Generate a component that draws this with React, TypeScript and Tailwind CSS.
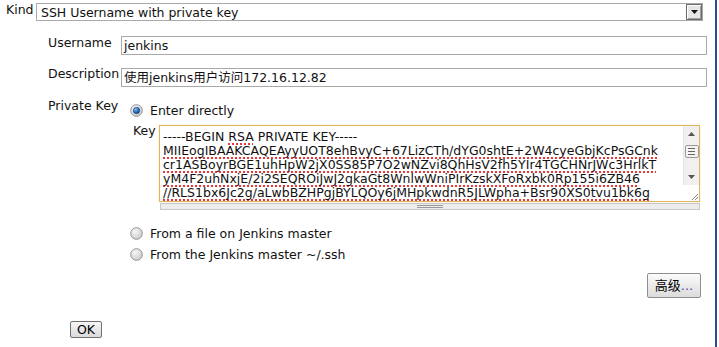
import React from "react";

function Radio({ checked }: { checked?: boolean }) {
  const id = checked ? "rc" : "ru";
  return (
    <svg width="13" height="13" viewBox="0 0 13 13" className="shrink-0">
      <defs>
        <radialGradient id={id + "o"} cx="0.35" cy="0.3" r="0.8">
          <stop offset="0" stopColor="#f8f8f8" />
          <stop offset="1" stopColor="#c9c9c9" />
        </radialGradient>
        <radialGradient id={id + "i"} cx="0.35" cy="0.3" r="0.8">
          <stop offset="0" stopColor="#8cc4f2" />
          <stop offset="0.5" stopColor="#2f78c4" />
          <stop offset="1" stopColor="#0d3a78" />
        </radialGradient>
      </defs>
      <circle cx="6.5" cy="6.5" r="5.8" fill={`url(#${id}o)`} stroke="#929292" strokeWidth="1" />
      {checked && <circle cx="6.5" cy="6.5" r="3.2" fill={`url(#${id}i)`} stroke="#143d73" strokeWidth="0.6" />}
    </svg>
  );
}

const sq = "underline decoration-dotted decoration-[#e8383a] decoration-[1.5px] underline-offset-[2px] [text-decoration-skip-ink:none]";

export default function App() {
  const lines = [
    "MIIEogIBAAKCAQEAyyUOT8ehBvyC+67LizCTh/dYG0shtE+2W4cyeGbjKcPsGCnk",
    "cr1ASBoyrBGE1uhHpW2jX0SS85P7O2wNZvi8QhHsV2fh5YIr4TGCHNrJWc3HrlkT",
    "yM4F2uhNxjE/2i2SEQROiJwJ2gkaGt8WnlwWniPIrKzskXFoRxbk0Rp155i6ZB46",
    "//RLS1bx6Jc2g/aLwbBZHPgjBYLQOy6jMHpkwdnR5JLWpha+Bsr90XS0tvu1bk6g",
  ];
  return (
    <div
      className="flex w-[719px] h-[347px] bg-white text-[#111] overflow-hidden"
      style={{ fontFamily: "'DejaVu Sans', 'Noto Sans CJK SC', sans-serif", fontSize: "12.5px" }}
    >
      <div className="w-[715px] flex flex-col pt-[3px]">
        {/* Kind */}
        <div className="flex items-start h-[18px]">
          <div className="w-[36px] pl-[6px] leading-[15px] -mt-[1.5px]">Kind</div>
          <div className="w-[667px] h-[18px] border border-[#a9a9a9] flex items-center justify-between pl-[4px]">
            <span className="leading-[15px] mt-[1px]">SSH Username with private key</span>
            <div className="w-[16px] h-[16px] bg-[#e6e6e6] border border-[#6b6b6b] shadow-[inset_1px_1px_0_#ffffff,inset_-1px_-1px_0_#a0a0a0] flex items-center justify-center">
              <svg width="7" height="4" viewBox="0 0 7 4">
                <polygon points="0,0 7,0 3.5,4" fill="#111" />
              </svg>
            </div>
          </div>
        </div>

        {/* Username */}
        <div className="flex items-start mt-[15px] pl-[48px]">
          <div className="w-[73px] leading-[15px] -mt-[1.5px]">Username</div>
          <div className="w-[586px] h-[19px] border border-[#a9a9a9] flex items-center pl-[2px] leading-[15px]">jenkins</div>
        </div>

        {/* Description */}
        <div className="flex items-start mt-[13px] pl-[48px]">
          <div className="w-[73px] leading-[15px] -mt-[2.5px]">Description</div>
          <div className="w-[586px] h-[19px] border border-[#a9a9a9] flex items-center pl-[2px] leading-[15px]">
            使用jenkins用户访问172.16.12.82
          </div>
        </div>

        {/* Private Key */}
        <div className="flex items-start mt-[11px] pl-[48px]">
          <div className="w-[80px] leading-[15px]">Private Key</div>
          <div className="w-[573px] flex flex-col">
            <div className="flex items-center mt-[4.5px] h-[15px] leading-[15px] pl-[2px] gap-[7px]">
              <Radio checked />
              <span>Enter directly</span>
            </div>
            <div className="flex items-start mt-[7.5px]">
              <div className="w-[31px] pl-[5px] leading-[15px] -mt-[2.5px]">Key</div>
              <div className="w-[541px] h-[77px] border border-[#dfb65e] shadow-[0_0_1px_#f0d090] flex bg-white">
                <div className="flex-1 overflow-hidden pl-[3px] pt-[4px] text-[12.5px] leading-[14px]">
                  <div className="whitespace-nowrap">
                    -----BEGIN <span className={sq}>RSA</span> PRIVATE KEY-----
                  </div>
                  {lines.map((l, i) => (
                    <div key={i} className="whitespace-nowrap">
                      <span className={sq}>{l}</span>
                    </div>
                  ))}
                </div>
                <div className="w-[16px] h-full flex flex-col">
                  <div className="flex-1 bg-[#f0f0f0] border-l border-[#e4e4e4] flex flex-col items-center">
                    <div className="h-[16px] flex items-center justify-center">
                      <svg width="7" height="4" viewBox="0 0 7 4">
                        <polygon points="0,4 7,4 3.5,0" fill="#555" />
                      </svg>
                    </div>
                    <div className="mt-[3px] w-[14px] h-[13px] bg-[#f4f4f4] border border-[#9a9a9a] rounded-[2px] flex flex-col items-center justify-center gap-[2px]">
                      <div className="w-[7px] h-px bg-[#666]" />
                      <div className="w-[7px] h-px bg-[#666]" />
                      <div className="w-[7px] h-px bg-[#666]" />
                    </div>
                    <div className="flex-1" />
                    <div className="h-[16px] flex items-center justify-center">
                      <svg width="7" height="4" viewBox="0 0 7 4">
                        <polygon points="0,0 7,0 3.5,4" fill="#555" />
                      </svg>
                    </div>
                  </div>
                  <div className="h-[16px] bg-white flex items-end justify-end">
                    <svg width="10" height="10" viewBox="0 0 10 10">
                      <line x1="9" y1="3" x2="3" y2="9" stroke="#888" strokeWidth="1" />
                      <line x1="9" y1="6" x2="6" y2="9" stroke="#888" strokeWidth="1" />
                    </svg>
                  </div>
                </div>
              </div>
            </div>
            <div className="ml-[32px] mt-[1px] w-[540px] h-[7px] bg-[#ececec] border border-[#c8c8c8] flex flex-col items-center justify-center gap-[1px]">
              <div className="w-[26px] h-px bg-[#9a9a9a]" />
              <div className="w-[26px] h-px bg-[#9a9a9a]" />
            </div>
            <div className="flex items-center mt-[15.5px] h-[15px] leading-[15px] pl-[2px] gap-[7px]">
              <Radio />
              <span>From a file on Jenkins master</span>
            </div>
            <div className="flex items-center mt-[6px] h-[15px] leading-[15px] pl-[2px] gap-[7px]">
              <Radio />
              <span>From the Jenkins master ~/.ssh</span>
            </div>
            <div className="self-end mt-[11.5px] w-[54px] h-[25px] border border-[#8f8f8f] rounded-[2px] bg-gradient-to-b from-[#fbfbfb] to-[#dcdcdc] flex items-center justify-center text-[13px] text-black">
              <span>高级</span>
              <span className="text-[#6a3f9a]">...</span>
            </div>
          </div>
        </div>

        {/* OK */}
        <div className="ml-[70px] mt-[23px] w-[32px] h-[17px] border border-[#707070] rounded-[2px] bg-gradient-to-b from-[#f6f6f6] to-[#dadada] flex items-center justify-center leading-[15px] text-black">
          OK
        </div>
      </div>
      <div className="w-[2px] h-full bg-[#2e4d8c]" />
    </div>
  );
}
